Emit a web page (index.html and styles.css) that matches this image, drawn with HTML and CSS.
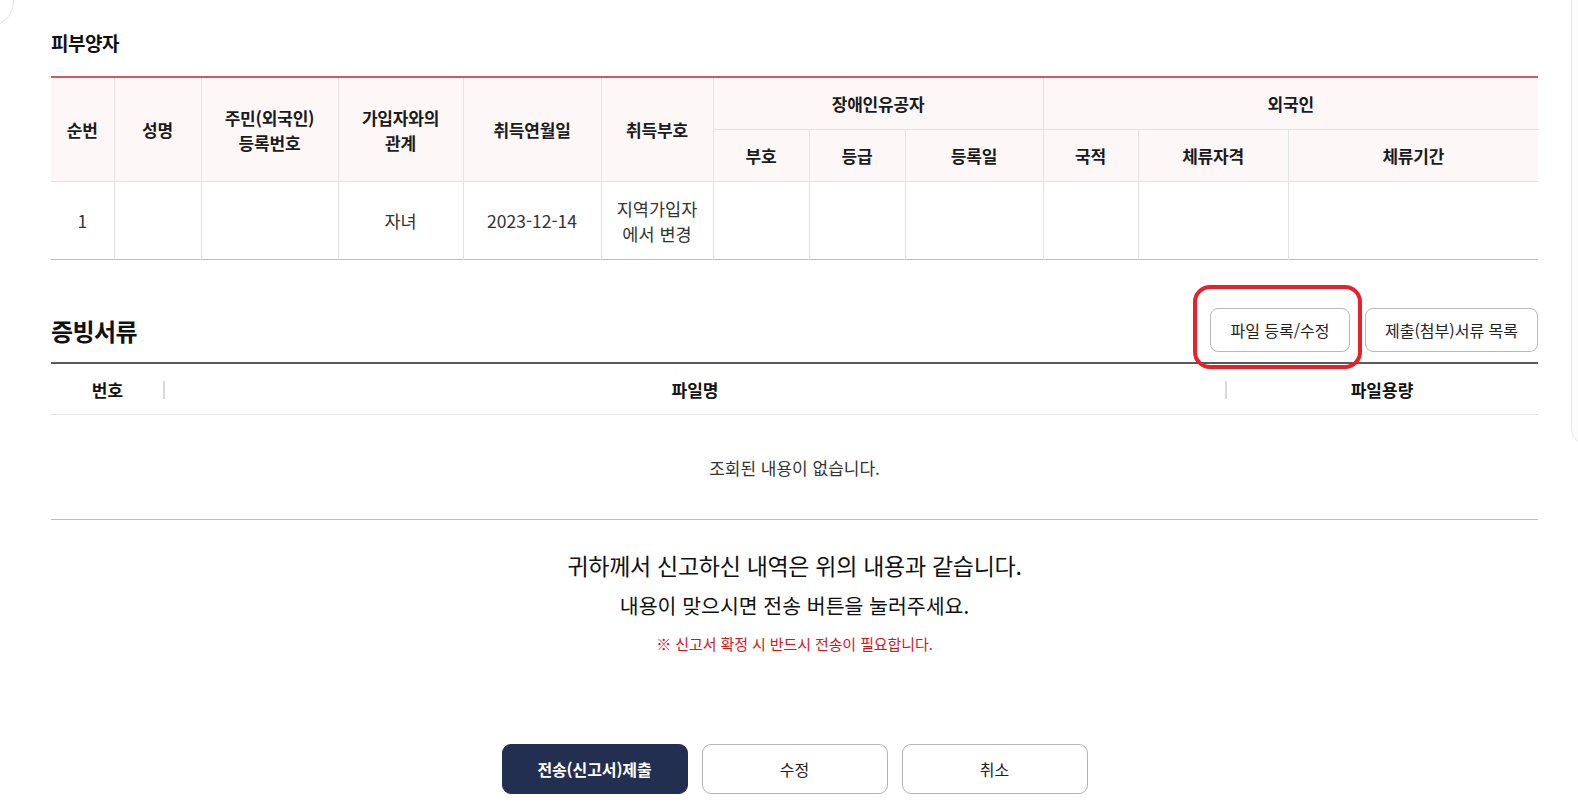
FILE: index.html
```html
<!DOCTYPE html>
<html lang="ko">
<head>
    <meta charset="UTF-8">
    <meta name="viewport" content="width=device-width, initial-scale=1.0">
    <title>피부양자 신고 확인</title>
    <link rel="stylesheet" href="styles.css">
</head>
<body>
    <div class="corner-arc"></div>
    <div class="side-panel"></div>

    <div class="page">
        <h2 class="sub-title">피부양자</h2>
        <table class="dep-table">
            <colgroup>
                <col><col><col><col><col><col><col><col><col><col><col><col>
            </colgroup>
            <thead>
                <tr>
                    <th rowspan="2">순번</th>
                    <th rowspan="2">성명</th>
                    <th rowspan="2">주민(외국인)<br>등록번호</th>
                    <th rowspan="2">가입자와의<br>관계</th>
                    <th rowspan="2">취득연월일</th>
                    <th rowspan="2">취득부호</th>
                    <th colspan="3">장애인유공자</th>
                    <th colspan="3">외국인</th>
                </tr>
                <tr>
                    <th>부호</th>
                    <th>등급</th>
                    <th>등록일</th>
                    <th>국적</th>
                    <th>체류자격</th>
                    <th>체류기간</th>
                </tr>
            </thead>
            <tbody>
                <tr>
                    <td>1</td>
                    <td></td>
                    <td></td>
                    <td>자녀</td>
                    <td>2023-12-14</td>
                    <td>지역가입자<br>에서 변경</td>
                    <td></td>
                    <td></td>
                    <td></td>
                    <td></td>
                    <td></td>
                    <td></td>
                </tr>
            </tbody>
        </table>

        <div class="section-head">
            <h2 class="section-title">증빙서류</h2>
            <div class="head-btns">
                <span class="marked">
                    <button class="btn-line">파일 등록/수정</button>
                </span>
                <button class="btn-line wide">제출(첨부)서류 목록</button>
            </div>
        </div>
        <table class="file-table">
            <thead>
                <tr>
                    <th class="col-no"><span>번호</span></th>
                    <th class="col-name"><span>파일명</span></th>
                    <th class="col-size"><span>파일용량</span></th>
                </tr>
            </thead>
            <tbody>
                <tr>
                    <td colspan="3" class="empty">조회된 내용이 없습니다.</td>
                </tr>
            </tbody>
        </table>

        <div class="confirm">
            <p class="confirm-main">귀하께서 신고하신 내역은 위의 내용과 같습니다.</p>
            <p class="confirm-sub">내용이 맞으시면 전송 버튼을 눌러주세요.</p>
            <p class="confirm-note">※ 신고서 확정 시 반드시 전송이 필요합니다.</p>
        </div>

        <div class="bottom-btns">
            <button class="btn-big primary">전송(신고서)제출</button>
            <button class="btn-big">수정</button>
            <button class="btn-big">취소</button>
        </div>
    </div>
</body>
</html>
```

FILE: styles.css
```css
body {
    margin: 0;
    padding: 0;
    background: #fff;
    font-family: "Noto Sans CJK KR", "Noto Sans", sans-serif;
    color: #222;
    overflow: hidden;
}
.corner-arc {
    position: absolute;
    left: -38px;
    top: -25px;
    width: 50px;
    height: 50px;
    border: 1px solid #e4e4e4;
    border-radius: 50%;
}
.side-panel {
    position: absolute;
    left: 1571px;
    top: -10px;
    width: 40px;
    height: 453px;
    border: 1px solid #e8e8e8;
    border-radius: 0 0 0 16px;
    background: #fcfcfc;
}
.page {
    width: 1487px;
    padding: 0 0 0 51px;
}
.sub-title {
    margin: 0 0 20px;
    padding-top: 30px;
    font-size: 19px;
    font-weight: 700;
    line-height: 26px;
    color: #111;
    letter-spacing: -0.5px;
}

/* 피부양자 표 */
.dep-table {
    width: 100%;
    table-layout: fixed;
    border-collapse: collapse;
    border-top: 2px solid #cc5c5c;
    border-bottom: 1px solid #bcbcc4;
}
.dep-table col:nth-child(1) { width: 63px; }
.dep-table col:nth-child(2) { width: 87px; }
.dep-table col:nth-child(3) { width: 137px; }
.dep-table col:nth-child(4) { width: 125px; }
.dep-table col:nth-child(5) { width: 138px; }
.dep-table col:nth-child(6) { width: 112px; }
.dep-table col:nth-child(7) { width: 96px; }
.dep-table col:nth-child(8) { width: 96px; }
.dep-table col:nth-child(9) { width: 138px; }
.dep-table col:nth-child(10) { width: 95px; }
.dep-table col:nth-child(11) { width: 150px; }
.dep-table col:nth-child(12) { width: 250px; }
.dep-table th,
.dep-table td {
    border: 1px solid #e2e2e2;
    text-align: center;
    padding: 0;
    font-size: 17px;
    line-height: 25px;
}
.dep-table tr > :first-child { border-left: none; }
.dep-table tr > :last-child { border-right: none; }
.dep-table thead tr:first-child th { border-top: none; }
.dep-table tbody td { border-bottom: none; }
.dep-table th {
    background: #fdf7f7;
    font-weight: 700;
    color: #1b1b1b;
    height: 51px;
    letter-spacing: -0.2px;
}
.dep-table td {
    height: 77px;
    color: #333;
    font-weight: 400;
    font-size: 17.5px;
}

/* 증빙서류 */
.section-head {
    display: flex;
    justify-content: space-between;
    align-items: center;
    margin-top: 48px;
    margin-bottom: 10px;
}
.section-title {
    margin: 0;
    font-size: 24px;
    font-weight: 700;
    color: #111;
    letter-spacing: -0.6px;
}
.head-btns {
    display: flex;
    gap: 15px;
}
.marked {
    position: relative;
    display: inline-block;
}
.marked::after {
    content: "";
    position: absolute;
    left: -17px;
    top: -23px;
    right: -12px;
    bottom: -17px;
    border: 4.5px solid #e8202a;
    border-radius: 17px;
}
.btn-line {
    height: 44px;
    width: 140px;
    border: 1px solid #b9b9b9;
    border-radius: 8px;
    background: #fff;
    font-family: inherit;
    font-size: 16px;
    color: #222;
    cursor: pointer;
}
.btn-line.wide {
    width: 173px;
}

.file-table {
    width: 100%;
    table-layout: fixed;
    border-collapse: collapse;
    border-top: 2px solid #5a5a5a;
    border-bottom: 1px solid #bcbcc4;
}
.file-table th {
    height: 50px;
    border-bottom: 1px solid #e4e4e4;
    font-size: 17px;
    font-weight: 700;
    color: #111;
    padding: 0;
    position: relative;
}
.col-no { width: 113px; }
.col-size { width: 312px; }
.col-no::after,
.col-size::before {
    content: "";
    position: absolute;
    top: 17px;
    width: 2px;
    height: 18px;
    background: #dadada;
}
.col-no::after { right: -1px; }
.col-size::before { left: -1px; }
.empty {
    height: 104px;
    text-align: center;
    font-size: 17px;
    color: #333;
    padding: 0;
}

/* 안내 문구 */
.confirm {
    text-align: center;
    padding-top: 30px;
}
.confirm p {
    margin: 0;
}
.confirm-main {
    font-size: 23px;
    line-height: 30px;
    color: #111;
    letter-spacing: -0.3px;
}
.confirm-sub {
    margin-top: 10px !important;
    font-size: 20.5px;
    line-height: 30px;
    color: #111;
}
.confirm-note {
    margin-top: 13px !important;
    font-size: 15px;
    line-height: 22px;
    color: #d6141c;
    letter-spacing: -0.1px;
}

.bottom-btns {
    display: flex;
    justify-content: center;
    gap: 14px;
    margin-top: 89px;
}
.btn-big {
    width: 186px;
    height: 50px;
    border: 1px solid #b4b4b4;
    border-radius: 9px;
    background: #fff;
    font-family: inherit;
    font-size: 16px;
    color: #222;
    cursor: pointer;
}
.btn-big.primary {
    background: #232f51;
    border-color: #232f51;
    color: #fff;
    font-weight: 700;
    letter-spacing: -0.1px;
}
```
